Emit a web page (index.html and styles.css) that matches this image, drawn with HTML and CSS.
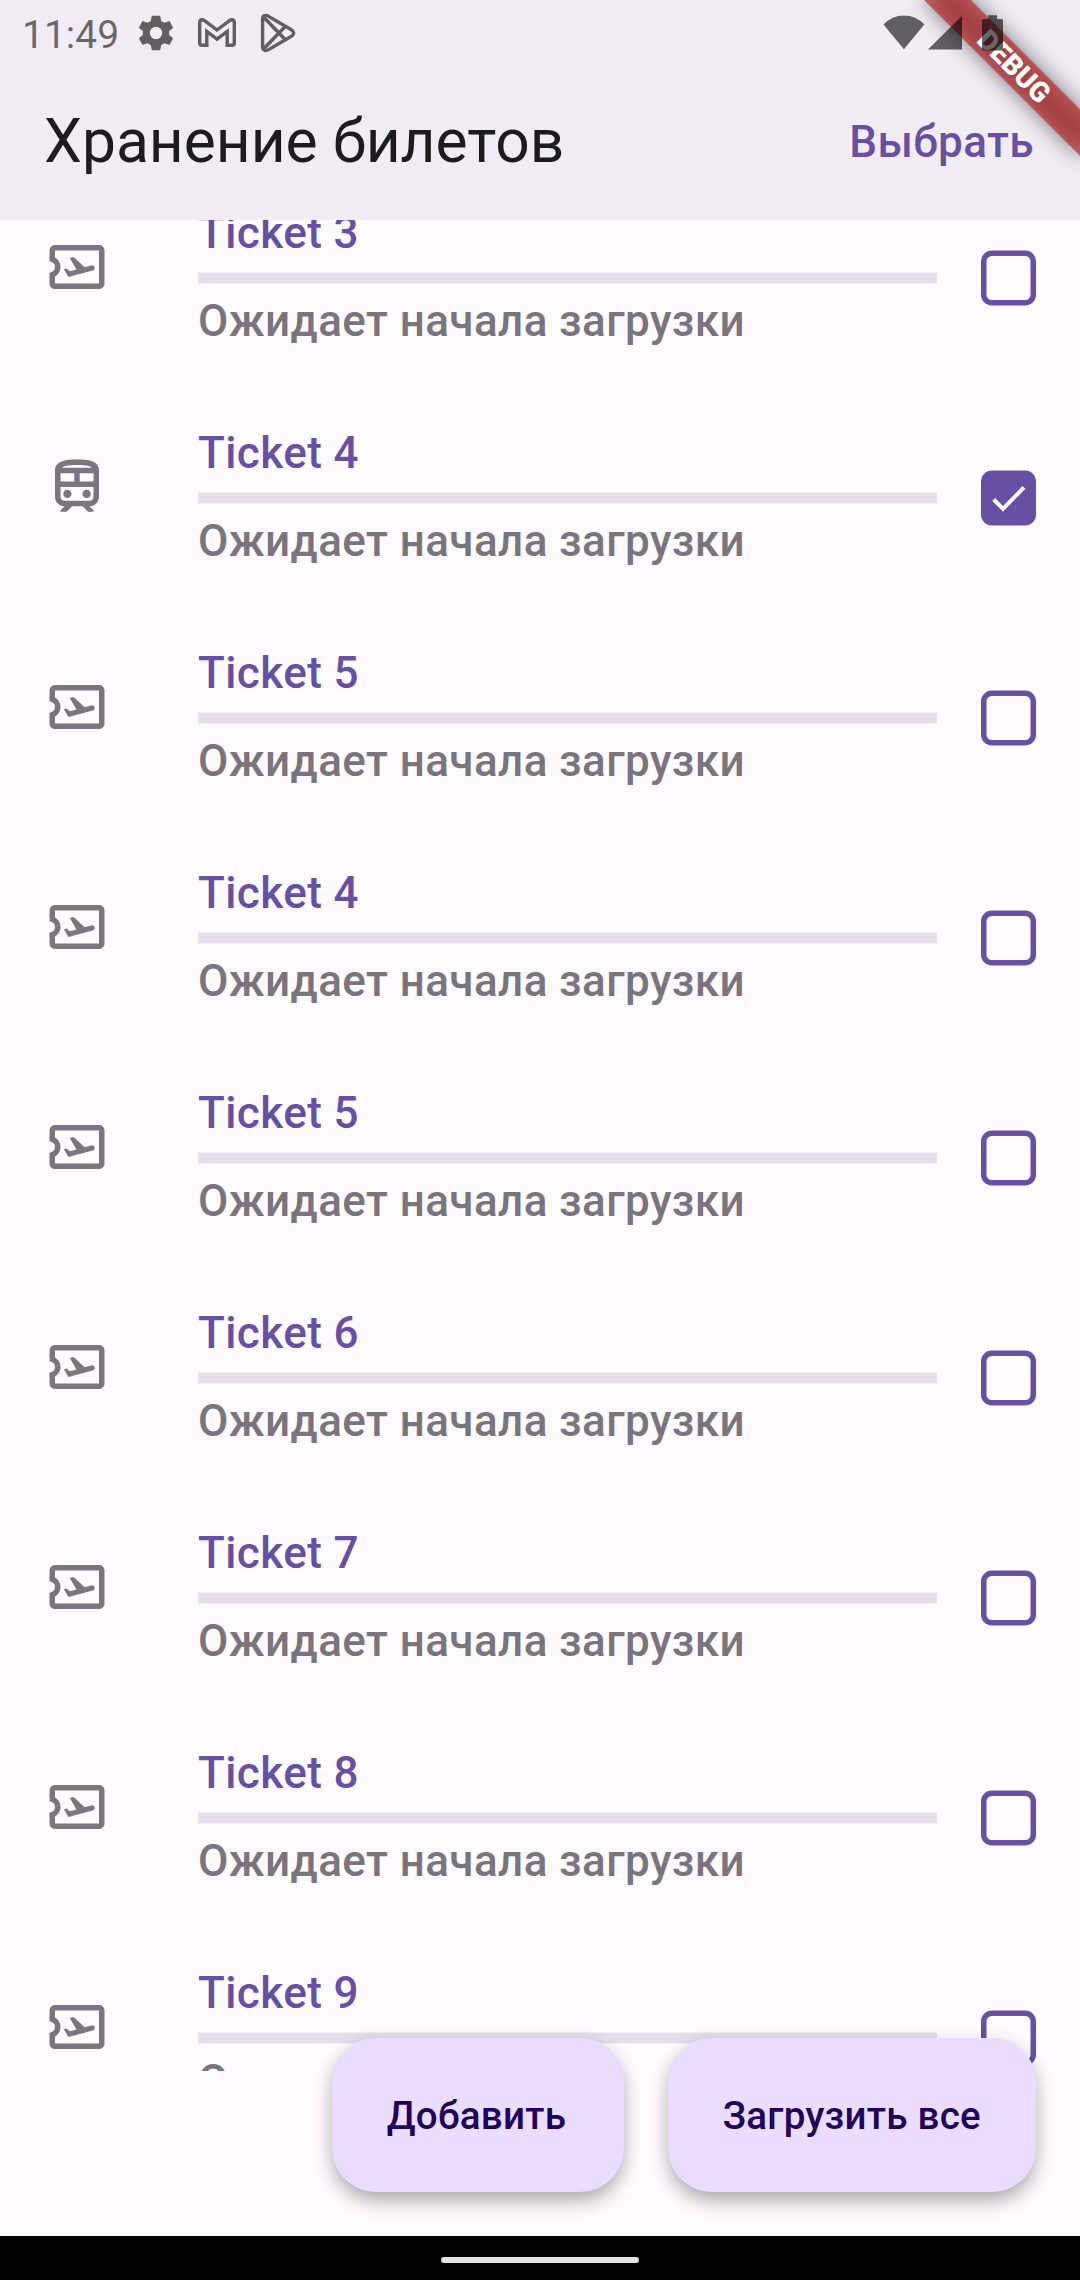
FILE: index.html
```html
<!DOCTYPE html>
<html lang="ru">
<head>
<meta charset="utf-8">
<title>Хранение билетов</title>
<link rel="stylesheet" href="styles.css">
</head>
<body>
<svg width="0" height="0" class="sprite" aria-hidden="true">
  <symbol id="plane" viewBox="0 0 24 24">
    <path d="M20 4H4C2.9 4 2.01 4.9 2.01 6v4C3.11 10 4 10.9 4 12s-.89 2-2 2v4c0 1.1.9 2 2 2h16c1.1 0 2-.9 2-2V6c0-1.1-.9-2-2-2zm0 14H4v-2.54c1.19-.69 2-1.99 2-3.46s-.81-2.77-2-3.46V6h16v12z"/>
    <path d="M17.73 13.3l-8.86 2.36-1.66-2.88.93-.25 1.26.99 2.39-.64-2.4-4.16 1.4-.38 4.01 3.74 2.44-.65c.51-.14 1.04.17 1.18.68.13.51-.17 1.04-.69 1.19z"/>
  </symbol>
  <symbol id="train" viewBox="0 0 24 24">
    <path fill-rule="evenodd" d="M12 2c-4 0-8 .5-8 4v9.5C4 17.43 5.57 19 7.5 19L6 20.5v.5h2.23l2-2H14l2 2h2v-.5L16.5 19c1.93 0 3.5-1.57 3.5-3.5V6c0-3.5-3.58-4-8-4zm0 2c3.51 0 4.96.48 5.57 1H6.43c.61-.52 2.06-1 5.57-1zM6 7h5v3H6V7zm12 8.5c0 .83-.67 1.5-1.5 1.5h-9c-.83 0-1.5-.67-1.5-1.5V12h12v3.5zm0-5.5h-5V7h5v3z"/>
    <circle cx="8.5" cy="14.5" r="1.5"/><circle cx="15.5" cy="14.5" r="1.5"/>
  </symbol>
  <symbol id="off" viewBox="0 0 55 56">
    <rect x="2.75" y="3.25" width="49.5" height="49.5" rx="8" fill="none" stroke="#6750a4" stroke-width="5.500"/>
  </symbol>
  <symbol id="on" viewBox="0 0 55 56">
    <rect y=".5" width="55" height="55" rx="11" fill="#6750a4"/>
    <path d="M12.700 29.500L22 38.800L43 17.400" fill="none" stroke="#fff" stroke-width="4"/>
  </symbol>
</svg>
<div class="screen">
  <div class="status">
    <span class="clock">11:49</span>
    <svg class="gear" viewBox="-18 -18 36 36"><path fill-rule="evenodd" d="M-4.2 -17.3H4.2L5.200 -12.100L8.500 -10.200L13.500 -12L17.200 -5.200L13.200 -1.900V1.900L17.200 5.200L13.500 12L8.500 10.200L5.200 12.100L4.200 17.300H-4.200L-5.200 12.100L-8.500 10.200L-13.500 12L-17.200 5.200L-13.200 1.900V-1.900L-17.200 -5.200L-13.500 -12L-8.500 -10.200L-5.200 -12.100ZM0 -6.200A6.200 6.200 0 1 0 0 6.200A6.200 6.200 0 1 0 0 -6.200Z"/></svg>
    <svg class="mail" viewBox="0 0 38 30"><path d="M1.700 25.200V5Q1.700 1.700 4.200 1.700Q5.200 1.700 6.500 2.700L19 12L31.500 2.700Q32.800 1.700 33.800 1.700Q36.300 1.700 36.300 5V25.200Q36.300 27.300 34.200 27.300H29.200V13.500L19 21.200L8.800 13.500V27.300H3.800Q1.700 27.300 1.700 25.200Z"/></svg>
    <svg class="play" viewBox="0 0 36 40"><path d="M2.600 6Q2.600 2.400 6 2.400Q7 2.400 9 3.600L31 16.500Q33.800 18.300 33.800 20Q33.800 21.700 31 23.500L9 36.400Q7 37.600 6 37.600Q2.600 37.600 2.600 34ZM3.500 4L25.200 26.500M3.500 36L25.200 13.500"/></svg>
    <span class="spacer"></span>
    <svg class="wifi" viewBox="0 0 42 35"><path d="M0.500 9.500Q9 .5 20.900 .5Q33 .5 41.300 9.500L20.900 34.300Z"/></svg>
    <svg class="signal" viewBox="0 0 34 35"><path d="M34 .7V34.500H0Z"/></svg>
    <svg class="battery" viewBox="0 0 21 36"><path d="M6.200 .2H15V4H19.500Q21 4 21 5.500V33.700Q21 35.500 19.300 35.500H1.700Q0 35.500 0 33.700V5.500Q0 4 1.500 4H6.200Z"/></svg>
  </div>
  <header class="appbar">
    <h1>Хранение билетов</h1>
    <button class="select">Выбрать</button>
  </header>
  <main class="list">
    <div class="row"><svg class="kind"><use href="#plane"/></svg><div class="info"><p class="name">Ticket 3</p><div class="bar"></div><p class="state">Ожидает начала загрузки</p></div><svg class="check"><use href="#off"/></svg></div>
    <div class="row"><svg class="kind"><use href="#train"/></svg><div class="info"><p class="name">Ticket 4</p><div class="bar"></div><p class="state">Ожидает начала загрузки</p></div><svg class="check"><use href="#on"/></svg></div>
    <div class="row"><svg class="kind"><use href="#plane"/></svg><div class="info"><p class="name">Ticket 5</p><div class="bar"></div><p class="state">Ожидает начала загрузки</p></div><svg class="check"><use href="#off"/></svg></div>
    <div class="row"><svg class="kind"><use href="#plane"/></svg><div class="info"><p class="name">Ticket 4</p><div class="bar"></div><p class="state">Ожидает начала загрузки</p></div><svg class="check"><use href="#off"/></svg></div>
    <div class="row"><svg class="kind"><use href="#plane"/></svg><div class="info"><p class="name">Ticket 5</p><div class="bar"></div><p class="state">Ожидает начала загрузки</p></div><svg class="check"><use href="#off"/></svg></div>
    <div class="row"><svg class="kind"><use href="#plane"/></svg><div class="info"><p class="name">Ticket 6</p><div class="bar"></div><p class="state">Ожидает начала загрузки</p></div><svg class="check"><use href="#off"/></svg></div>
    <div class="row"><svg class="kind"><use href="#plane"/></svg><div class="info"><p class="name">Ticket 7</p><div class="bar"></div><p class="state">Ожидает начала загрузки</p></div><svg class="check"><use href="#off"/></svg></div>
    <div class="row"><svg class="kind"><use href="#plane"/></svg><div class="info"><p class="name">Ticket 8</p><div class="bar"></div><p class="state">Ожидает начала загрузки</p></div><svg class="check"><use href="#off"/></svg></div>
    <div class="row"><svg class="kind"><use href="#plane"/></svg><div class="info"><p class="name">Ticket 9</p><div class="bar"></div><p class="state">Ожидает начала загрузки</p></div><svg class="check"><use href="#off"/></svg></div>
  </main>
  <div class="actions">
    <button class="fab add">Добавить</button>
    <button class="fab load">Загрузить все</button>
  </div>
  <footer class="nav"><span class="handle"></span></footer>
  <div class="debug-shadow"></div>
  <div class="debug">DEBUG</div>
</div>
</body>
</html>
```
FILE: styles.css
```css
* { box-sizing: border-box; }
body { margin: 0; font-family: Roboto, sans-serif; }
h1, p { margin: 0; font-weight: inherit; }
button { border: 0; padding: 0; background: none; font: inherit; color: inherit; }
.sprite { position: absolute; }

.screen {
  position: relative;
  display: flex;
  flex-direction: column;
  width: 1080px;
  height: 2280px;
  overflow: hidden;
  background: #fffbff;
}

/* System status bar: its glyphs sit above the debug ribbon */
.status {
  position: relative;
  z-index: 5;
  display: flex;
  flex: none;
  align-items: flex-start;
  height: 66px;
  padding: 0 77px 0 22px;
}
.status svg { flex: none; fill: rgba(0, 0, 0, .6); }
.clock {
  width: 111px;
  font-size: 39px;
  line-height: 70px;
  color: rgba(0, 0, 0, .57);
}
.gear { width: 36px; height: 36px; margin: 15px 0 0 4.500px; }
.status .mail { width: 38px; height: 30px; margin: 18px 0 0 24px; }
.status .play { width: 36px; height: 40px; margin: 13px 0 0 24px; }
.status .mail, .status .play { fill: none; stroke: rgba(0, 0, 0, .6); stroke-width: 3.400; }
.spacer { flex: 1; }
.wifi { width: 42px; height: 35px; margin-top: 15px; }
.signal { width: 34px; height: 35px; margin: 15px 0 0 3px; }
.battery { width: 21px; height: 36px; margin: 15px 0 0 20px; }

.appbar {
  display: flex;
  flex: none;
  align-items: center;
  justify-content: space-between;
  height: 220px;
  margin-top: -66px;
  padding: 64px 46px 0 44px;
  background: #f2edf5;
  color: #1c1b1f;
}
.appbar h1 { padding-bottom: 2px; font-size: 60.500px; line-height: 77px; }
.select { font-size: 44px; font-weight: 500; letter-spacing: .410px; color: #6750a4; }

.list { flex: none; height: 1851px; overflow: hidden; }
.row {
  display: flex;
  align-items: center;
  height: 220px;
  padding: 0 44px;
}
.row:first-child { margin-top: -53px; }
.kind { flex: none; align-self: flex-start; width: 66px; height: 66px; margin: 67px 88px 0 0; fill: #7b757f; }
.info {
  flex: 1;
  font-size: 44px;
  font-weight: 500;
  line-height: 66px;
  letter-spacing: .410px;
}
.name { color: #6750a4; }
.state { color: #79747e; }
.bar {
  height: 12px;
  margin: 6px 0 4px;
  border: solid #f2eef6;
  border-width: 1px 0;
  background: #e6e0ec;
}
.check {
  flex: none;
  width: 55px;
  height: 56px;
  margin: 2px 0 0 44px;
}

/* Floating buttons rise above the bottom edge of the list */
.actions {
  position: relative;
  z-index: 1;
  display: flex;
  flex: none;
  align-items: flex-end;
  justify-content: flex-end;
  gap: 44px;
  height: 165px;
  padding: 0 44px 44px;
}
.fab {
  flex: none;
  height: 154px;
  padding: 0 55px;
  border-radius: 44px;
  background: #eaddff;
  color: #21005d;
  font-size: 38.500px;
  font-weight: 500;
  letter-spacing: .275px;
  text-align: left;
  box-shadow: 0 11px 20px -2px rgba(0, 0, 0, .27), 0 3px 20px rgba(0, 0, 0, .1);
}
.add { width: 292px; }

.nav {
  position: relative;
  z-index: 2;
  display: flex;
  flex: none;
  align-items: center;
  justify-content: center;
  height: 44px;
  padding-top: 4px;
  background: #000;
}
.handle { width: 198px; height: 6px; border-radius: 3px; background: #e3e3e3; }

/* Corner ribbon laid over the page */
.debug, .debug-shadow {
  position: absolute;
  top: 49.600px;
  left: 903.900px;
  width: 220px;
  height: 33px;
  transform: rotate(45deg);
}
.debug-shadow { background: rgba(0, 0, 0, .5); filter: blur(10.900px); }
.debug {
  background: rgba(183, 28, 28, .63);
  color: #fff;
  font-size: 28px;
  font-weight: 900;
  line-height: 33px;
  text-align: center;
}
```
